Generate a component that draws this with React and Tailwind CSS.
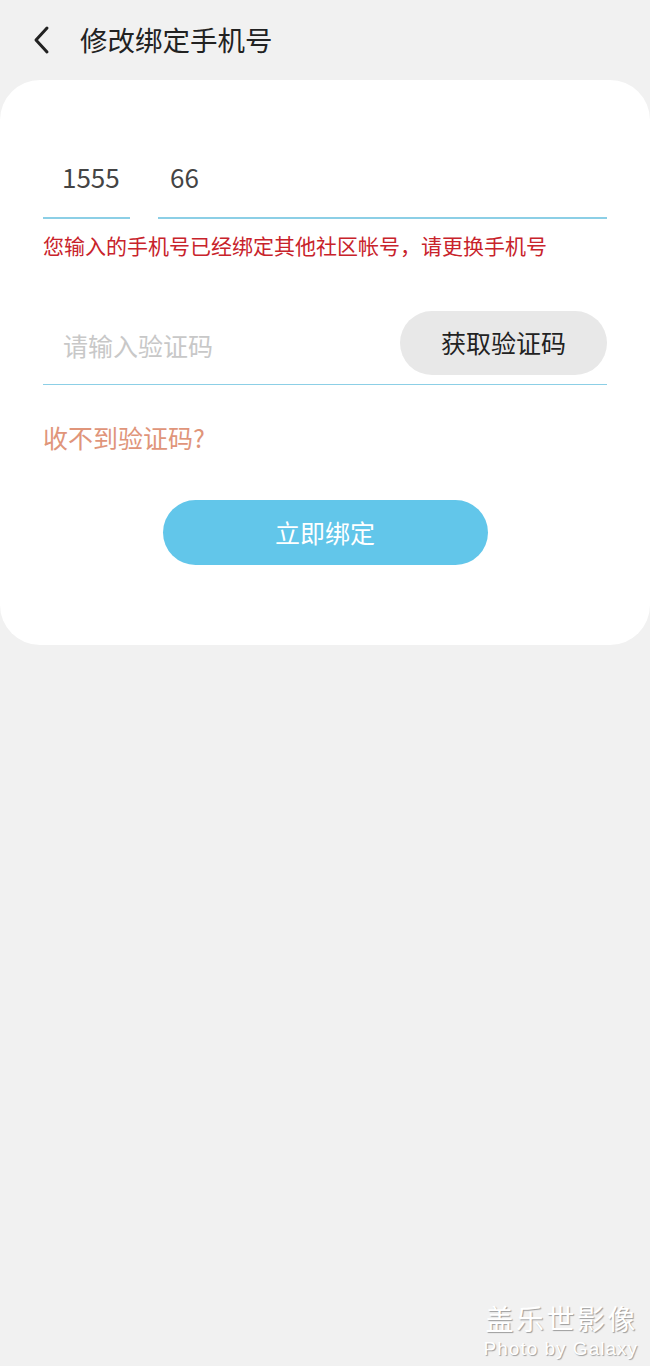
import React from 'react';

const font = { fontFamily: '"Noto Sans CJK SC", "Noto Sans", sans-serif' };

const App = () => {
  return (
    <div className="min-h-[1366px] w-[650px] bg-[#f1f1f1] relative overflow-hidden" style={font}>
      {/* Header */}
      <div className="h-[80px] flex items-center pl-[30px]">
        <svg width="24" height="30" viewBox="0 0 24 30" fill="none">
          <path d="M17 3 L6 15 L17 27" stroke="#222" strokeWidth="3" strokeLinecap="round" strokeLinejoin="round" />
        </svg>
        <h1 className="ml-[26px] text-[27.5px] text-[#222] leading-none">修改绑定手机号</h1>
      </div>

      {/* Card */}
      <div className="bg-white rounded-[40px] h-[565px] px-[43px] pt-[60px] flex flex-col">
        {/* Phone (partly masked) */}
        <div className="flex gap-[28px]">
          <div className="w-[87px] flex flex-col">
            <div className="h-[77px] pt-[24px] pl-[19px] text-[26px] text-[#444] leading-none">1555</div>
            <div className="h-[1.5px] bg-[#8ccfe6]" />
          </div>
          <div className="flex-1 flex flex-col">
            <div className="h-[77px] pt-[24px] pl-[12px] text-[26px] text-[#444] leading-none">66</div>
            <div className="h-[1.5px] bg-[#8ccfe6]" />
          </div>
        </div>
        <p className="mt-[16px] text-[21px] leading-none text-[#c8232b]">您输入的手机号已经绑定其他社区帐号，请更换手机号</p>

        {/* Code */}
        <div className="mt-[55px] flex flex-col">
          <div className="h-[73px] flex items-start justify-between">
            <span className="ml-[20px] mt-[22px] text-[25px] leading-none text-[#c8c8c8]">请输入验证码</span>
            <button className="w-[207px] h-[64px] rounded-full bg-[#e8e8e8] text-[25px] text-[#222]">获取验证码</button>
          </div>
          <div className="h-[1.5px] bg-[#8ccfe6]" />
        </div>

        <p className="mt-[40px] text-[25px] leading-none text-[#e0957a]">收不到验证码?</p>

        <div className="mt-[50px] flex justify-center">
          <button className="w-[325px] h-[65px] rounded-full bg-[#62c6ea] text-white text-[25px]">立即绑定</button>
        </div>
      </div>

      {/* Watermark */}
      <div className="absolute right-[12px] bottom-[8px] flex flex-col items-end gap-[8px] text-white [text-shadow:1px_1px_1px_rgba(0,0,0,0.35)]">
        <div className="text-[28px] leading-[28px] tracking-[2.5px]">盖乐世影像</div>
        <div className="text-[19px] leading-[18px] tracking-[1px]" style={{ fontFamily: '"Liberation Sans", sans-serif' }}>Photo by Galaxy</div>
      </div>
    </div>
  );
};

export default App;
